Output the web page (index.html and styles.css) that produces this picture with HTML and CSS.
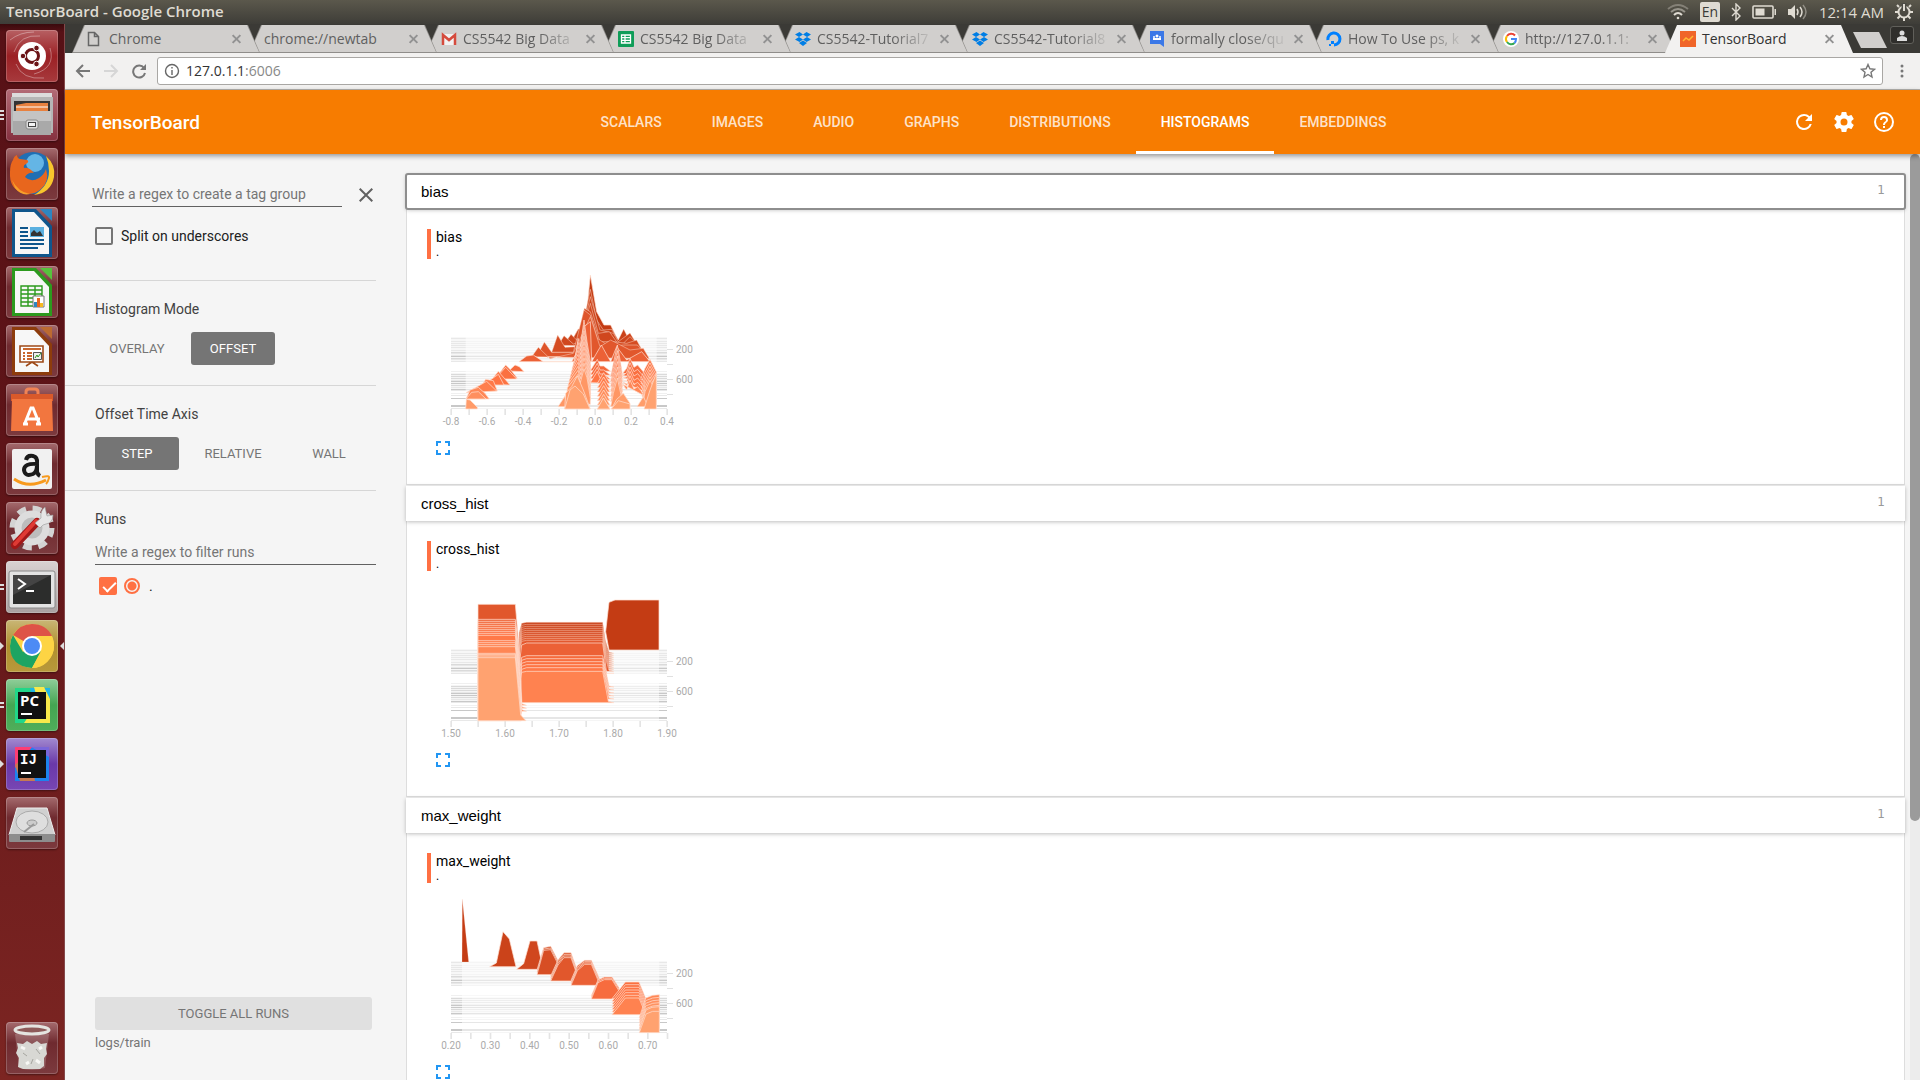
FILE: index.html
```html
<!DOCTYPE html>
<html lang="en">
<head>
<meta charset="utf-8">
<title>TensorBoard</title>
<link rel="stylesheet" href="styles.css">
</head>
<body>
<header class="panel">
  <span class="panel-title">TensorBoard - Google Chrome</span>
  <div class="indicators">
    <svg width="22" height="18" viewBox="0 0 22 18" fill="none" stroke="#dfdbd2" stroke-width="2"><path d="M1 6Q11-2 21 6" opacity=".35"/><path d="M4 9Q11 3 18 9" opacity=".5"/><path d="M7 12Q11 8 15 12"/><circle cx="11" cy="15" r="1.3" fill="#dfdbd2" stroke="none"/></svg>
    <span class="lang">En</span>
    <svg width="10" height="18" viewBox="0 0 10 18" fill="none" stroke="#dfdbd2" stroke-width="1.4"><path d="M1 5l8 8-4 4V1l4 4-8 8"/></svg>
    <svg width="25" height="14" viewBox="0 0 25 14"><rect x="1" y="1" width="20" height="12" rx="1" fill="none" stroke="#dfdbd2" stroke-width="1.6"/><rect x="3.5" y="3.500" width="9" height="7" fill="#dfdbd2"/><path d="M22.500 4v6h1.500V4z" fill="#dfdbd2"/></svg>
    <svg width="20" height="16" viewBox="0 0 20 16" fill="none" stroke="#dfdbd2" stroke-width="1.500"><path d="M0 5h3l4-4v14l-4-4H0z" fill="#dfdbd2" stroke="none"/><path d="M9 5q2 3 0 6M12 3q4 5 0 10"/><path d="M15 1q6 7 0 14" opacity=".45"/></svg>
    <time class="clock">12:14 AM</time>
    <svg width="18" height="18" viewBox="0 0 18 18" fill="none" stroke="#dfdbd2"><circle cx="9" cy="9" r="5.5" stroke-width="2"/><g stroke-width="2"><path d="M9 14v4M14 9h4M0 9h4M12.500 12.500l3 3M5.500 12.500l-3 3M14 4l2-2M4 4L2 2"/></g><path d="M9 0v8" stroke="#4b4a44" stroke-width="5"/><path d="M9 1v7" stroke-width="2"/></svg>
  </div>
</header>
<div class="desktop">
<nav class="launcher" aria-label="Launcher">
  <button class="tile tile-dash" aria-label="Dash"><svg viewBox="0 0 52 52"><g fill="none" stroke="#fff" opacity=".35"><path d="M8 22Q14 4 34 6M44 18q6 20-16 26M10 34Q16 50 38 48M4 10q10-8 24-8"/></g><circle cx="26" cy="26" r="14" fill="#fff"/><circle cx="26" cy="26" r="6.500" fill="none" stroke="#6b1417" stroke-width="3"/><g fill="#6b1417" stroke="#fff"><circle cx="17" cy="26" r="2.800"/><circle cx="30.500" cy="18" r="2.800"/><circle cx="30.500" cy="34" r="2.800"/></g></svg></button>
  <button class="tile tile-files" aria-label="Files"><svg viewBox="0 0 52 52"><path d="M6 4h40v8H6z" fill="#dcdcdc"/><path d="M5 8h42v36H5z" fill="#b5b5b5"/><path d="M8 12h36v12H8z" fill="#343434"/><path d="M10 16l10-2h22v10H10z" fill="#e8813f"/><path d="M10 18h32" stroke="#fff"/><path d="M7 22h38v24H7z" fill="#a9a9a9"/><path d="M7 22h38v10H7z" fill="#c4c4c4"/><rect x="20" y="31" width="12" height="9" rx="2" fill="#ddd" stroke="#888"/><rect x="22.500" y="33.500" width="7" height="4" fill="#f5f5f5" stroke="#444"/></svg><i class="pip"></i><i class="pip"></i><i class="pip"></i></button>
  <button class="tile" aria-label="Firefox"><svg viewBox="0 0 52 52"><circle cx="27" cy="25" r="21" fill="#1f6fb4"/><circle cx="29" cy="15" r="9" fill="#64b5e5"/><path d="M40 8q10 9 8 21-3 16-20 18 15-9 15-24 0-8-3-15z" fill="#f9c62c"/><path d="M7 12q1-4 4-5 0 3 3 4l7 1q3 1-1 4-3 1-2 4 5-1 10 5-6-1-9 4 6 6 14 1 5-3 7-9 4 12-5 20-8 7-18 4Q3 41 4 24q0-8 3-12z" fill="#e8661d"/><path d="M6 32q6 12 18 14-9 2-15-6z" fill="#f6a02b"/></svg></button>
  <button class="tile" aria-label="Writer"><svg viewBox="0 0 52 52"><path d="M6 2h24l16 17v31H6z" fill="#0f568c"/><path d="M9 5h19l15 16v26H9z" fill="#f7f7f7"/><path d="M34 2h12v12z" fill="#2d86c0"/><path d="M14 21h8M14 25h8M14 29h8M14 33h24M14 37h24M14 41h18" stroke="#0f568c" stroke-width="2"/><path d="M24 20h14v10H24z" fill="#5ab0e0"/><path d="M25 29v-3l3-3 3 3 3-2 3 5z" fill="#333"/></svg></button>
  <button class="tile" aria-label="Calc"><svg viewBox="0 0 52 52"><path d="M6 2h24l16 17v31H6z" fill="#2c9a1e"/><path d="M9 5h19l15 16v26H9z" fill="#f7f7f7"/><path d="M34 2h12v12z" fill="#57c23d"/><path d="M15 20h21v20H15zM15 24h21M15 28h21M15 32h21M15 36h21M22 20v20M29 20v20" fill="none" stroke="#2c9a1e" stroke-width="1.400"/><path d="M27 30h11v11H27z" fill="#fff" stroke="#777"/><path d="M28 36h3v5h-3z" fill="#2d86c0"/><path d="M31 32h3v9h-3z" fill="#e8661d"/><path d="M34 37h3v4h-3z" fill="#f5b921"/></svg></button>
  <button class="tile" aria-label="Impress"><svg viewBox="0 0 52 52"><path d="M6 2h24l16 17v31H6z" fill="#8d3c0c"/><path d="M9 5h19l15 16v26H9z" fill="#f7f7f7"/><path d="M34 2h12v12z" fill="#bc6a31"/><path d="M14 21h23v16H14zM20 41l6-4 6 4" fill="#fff" stroke="#9e4a18" stroke-width="1.600"/><path d="M17 24h18M17 28h2M17 31h2M17 34h2M21 28h5M21 31h5M21 34h5" stroke="#c9672e" stroke-width="2"/><path d="M27.500 27.500h8v7h-8z" fill="#eee" stroke="#555"/><path d="M29 33l2-3 1 2 3-4" fill="none" stroke="#2c9a1e"/></svg></button>
  <button class="tile" aria-label="Software"><svg viewBox="0 0 52 52"><path d="M20 16V8q0-3 3-3h6q3 0 3 3v8" fill="none" stroke="#f08355" stroke-width="3"/><path d="M5 10h42v7H5z" fill="#d9592a"/><path d="M6 15h40l1 32H5z" fill="#f2763f"/><path d="M17 40h5M30 40h5M19 39l6-15h2l6 15M20 35h14" fill="none" stroke="#fff" stroke-width="3"/></svg></button>
  <button class="tile" aria-label="Amazon"><svg viewBox="0 0 52 52"><rect x="6" y="6" width="40" height="40" rx="2" fill="#f1f1f1"/><path d="M20 17q1-5 7-4 5 1 4 8v8q1 3 3 4M31 21q-13-1-13 6 1 7 9 4 4-2 4-9" fill="none" stroke="#1b1b1b" stroke-width="4"/><path d="M8 36q15 10 32 1" fill="none" stroke="#f79a1e" stroke-width="3"/><path d="M36 34q8-2 7 1-1 4-3 6" fill="none" stroke="#f79a1e" stroke-width="2"/></svg></button>
  <button class="tile" aria-label="System Settings"><svg viewBox="0 0 52 52"><circle cx="26" cy="26" r="18" fill="none" stroke="#d3d3d3" stroke-width="9" stroke-dasharray="8 6.140"/><circle cx="26" cy="26" r="14" fill="#bdbdbd" stroke="#ddd" stroke-width="7"/><path d="M9 43l22-23" stroke="#a21818" stroke-width="8" stroke-linecap="round"/><path d="M9 42l21-23" stroke="#df3a34" stroke-width="4" stroke-linecap="round"/><path d="M29 21l6-5q-1-7 4-11l2 9 6-1q0 8-7 9-3 0-6 4z" fill="#e6e6e6" stroke="#999" stroke-width=".6"/></svg></button>
  <button class="tile tile-term" aria-label="Terminal"><svg viewBox="0 0 52 52"><rect x="3" y="10" width="46" height="37" rx="2" fill="#e3e3e3" stroke="#888"/><path d="M7 14h38v29H7z" fill="#2c2d2c"/><path d="M7 14h38L7 34z" fill="#444"/><path d="M12 18l7 5-7 5M20 30h8" fill="none" stroke="#fff" stroke-width="2"/></svg><i class="pip"></i><i class="pip"></i></button>
  <button class="tile tile-chrome" aria-label="Chrome"><svg viewBox="0 0 52 52"><circle cx="26" cy="26" r="22" fill="#fdd444"/><path d="M26 26L7 15Q14 4 26 4q14 0 20 12H26z" fill="#de5347"/><path d="M26 26l9 6-9 16Q4 46 4 26q0-6 3-11l10 17z" fill="#1da462"/><path d="M26 16h20q6 14-5 26-6 6-15 6l9-17z" fill="#fdd444"/><circle cx="26" cy="26" r="10" fill="#fff"/><circle cx="26" cy="26" r="8" fill="#4c8bf5"/></svg><i class="arrow"></i><i class="arrow arrow-right"></i></button>
  <button class="tile tile-pc" aria-label="PyCharm"><svg viewBox="0 0 52 52"><path d="M9 9h20l-6 35H9z" fill="#21d789"/><path d="M24 9h20v17L28 28z" fill="#1fb5e5"/><path d="M28 8h10l6 12v24H18l4-6h14z" fill="#f7e94b"/><path d="M12 13h28v27H12z" fill="#111"/><text x="14" y="27" font-family="Open Sans, sans-serif" font-weight="700" font-size="15" fill="#fff">PC</text><path d="M15 35h11" stroke="#fff" stroke-width="2"/></svg><i class="pip"></i><i class="pip"></i></button>
  <button class="tile tile-ij" aria-label="IntelliJ IDEA"><svg viewBox="0 0 52 52"><path d="M9 9h34v34H9z" fill="#1d83ee"/><path d="M9 9h17L9 30z" fill="#fe3d74"/><path d="M9 27l15-14 5 30H14z" fill="#c57a52"/><path d="M25 9h18v10z" fill="#7a66d9"/><path d="M12 12h28v28H12z" fill="#111"/><text x="14" y="26" font-family="Liberation Mono, monospace" font-weight="700" font-size="14" fill="#fff">IJ</text><path d="M15 35h10" stroke="#fff" stroke-width="2"/></svg><i class="arrow"></i></button>
  <button class="tile" aria-label="Disk"><svg viewBox="0 0 52 52"><path d="M11 11h30l8 27H3z" fill="#d0d0d0" stroke="#eee"/><path d="M3 37h46v7q0 1-1 1H4q-1 0-1-1z" fill="#8d8d8d"/><path d="M14 39h22v4H14z" fill="#333"/><ellipse cx="26" cy="25" rx="16" ry="11" fill="#dedede" stroke="#aaa"/><ellipse cx="26" cy="26" rx="5" ry="3" fill="#ccc" stroke="#999"/><path d="M28 27l-10 8" stroke="#999" stroke-width="2"/></svg></button>
  <button class="tile tile-trash" aria-label="Trash"><svg viewBox="0 0 52 52"><path d="M9 12h34l-4 34q-13 4-26 0z" fill="#fff" opacity=".2"/><path d="M11 21l6 1 4-3 5 3 5-3 4 3 6-1-1 6 1 5-3 4v8l-4 3H17l-5-2 1-9-3-5 2-5z" fill="#d8d8d4"/><path d="M15 25l4 2M30 38l4 3M20 42l3-2M36 25l-3 2" stroke="#f7f7f4" stroke-width="3"/><path d="M17 31l4 3M30 27l4 5M25 42l2-5" stroke="#a5a59f"/><ellipse cx="26" cy="8" rx="17" ry="4" fill="#8e5a59" stroke="#e4e4e0" stroke-width="3"/></svg></button>
</nav>
<div class="browser">
  <div class="tabstrip">
    <div class="tabs">
      <div class="tab"><svg class="favicon" viewBox="0 0 16 16"><path d="M1.500 1.500h6l4 4v9h-10zM7.500 1.500v4h4" fill="none" stroke="#666" stroke-width="1.500"/></svg><span class="tab-title">Chrome</span><button class="tab-close" aria-label="Close tab"></button></div>
      <div class="tab"><span class="tab-title">chrome://newtab</span><button class="tab-close" aria-label="Close tab"></button></div>
      <div class="tab"><svg class="favicon" viewBox="0 0 16 16"><path d="M1 3h14v11H1z" fill="#f1f1f1"/><path d="M2 14V4l6 5 6-5v10" fill="none" stroke="#d54b3d" stroke-width="2.500"/></svg><span class="tab-title fade">CS5542 Big Data</span><button class="tab-close" aria-label="Close tab"></button></div>
      <div class="tab"><svg class="favicon" viewBox="0 0 16 16"><rect width="16" height="16" rx="1" fill="#0f9d58"/><path d="M3.500 4h9v8h-9zM3.500 6.700h9M3.500 9.300h9M7 4v8" fill="none" stroke="#fff" stroke-width="1.300"/></svg><span class="tab-title fade">CS5542 Big Data</span><button class="tab-close" aria-label="Close tab"></button></div>
      <div class="tab"><svg class="favicon" viewBox="0 0 16 16"><path d="M4.500 1L8 3.500 4 6 0 3.500zM11.500 1L16 3.500 12 6 8 3.500zM4 6l4 2.500L4.500 11 0 8.500zM12 6l4 2.500-4.500 2.500L8 8.500zM8 9.500l4 2.500-4 3-4-3z" fill="#007ee5"/></svg><span class="tab-title fade">CS5542-Tutorial7</span><button class="tab-close" aria-label="Close tab"></button></div>
      <div class="tab"><svg class="favicon" viewBox="0 0 16 16"><path d="M4.500 1L8 3.500 4 6 0 3.500zM11.500 1L16 3.500 12 6 8 3.500zM4 6l4 2.500L4.500 11 0 8.500zM12 6l4 2.500-4.500 2.500L8 8.500zM8 9.500l4 2.500-4 3-4-3z" fill="#007ee5"/></svg><span class="tab-title fade">CS5542-Tutorial8</span><button class="tab-close" aria-label="Close tab"></button></div>
      <div class="tab"><svg class="favicon" viewBox="0 0 16 16"><path d="M1 0h14v16l-4-3H1z" fill="#3b78e7"/><path d="M4 9V7h8v2z" fill="#fff"/><circle cx="8" cy="5" r="1.500" fill="#fff"/><circle cx="5" cy="6" r="1" fill="#fff"/><circle cx="11" cy="6" r="1" fill="#fff"/></svg><span class="tab-title fade">formally close/qu</span><button class="tab-close" aria-label="Close tab"></button></div>
      <div class="tab"><svg class="favicon" viewBox="0 0 16 16"><path d="M2 9a6 6 0 1 1 6 5" fill="none" stroke="#0080ff" stroke-width="3"/><path d="M5 10h3v3H5zM3 13h2v2H3z" fill="#0080ff"/></svg><span class="tab-title fade">How To Use ps, k</span><button class="tab-close" aria-label="Close tab"></button></div>
      <div class="tab"><svg class="favicon" viewBox="0 0 16 16"><circle cx="8" cy="8" r="8" fill="#fff"/><g fill="none" stroke-width="2"><path d="M12 4.500A5 5 0 0 0 4 5" stroke="#ea4335"/><path d="M4 5a5 5 0 0 0 0 6" stroke="#fbbc05"/><path d="M4 11a5 5 0 0 0 7.500 1" stroke="#34a853"/><path d="M11.500 12Q13 10.500 13 8H8" stroke="#4285f4"/></g></svg><span class="tab-title fade">http://127.0.1.1:</span><button class="tab-close" aria-label="Close tab"></button></div>
      <div class="tab tab-active"><svg class="favicon" viewBox="0 0 16 16"><path d="M0 0h16v16H0z" fill="#f06529"/><path d="M3 10l3-3 3 2 4-4" fill="none" stroke="#ffb733" stroke-width="1.500"/></svg><span class="tab-title">TensorBoard</span><button class="tab-close" aria-label="Close tab"></button></div>
    </div>
    <button class="new-tab" aria-label="New tab"></button>
    <button class="profile" aria-label="Profile"><svg width="10" height="11" viewBox="0 0 10 11"><circle cx="5" cy="3" r="2.500" fill="#ddd"/><path d="M0 11V8q5-4 10 0v3z" fill="#ddd"/></svg></button>
  </div>
  <div class="toolbar">
    <button class="tool" aria-label="Back"><svg width="16" height="16" viewBox="0 0 16 16" fill="none" stroke="#777" stroke-width="2"><path d="M15 8H2M8 2L2 8l6 6"/></svg></button>
    <button class="tool" aria-label="Forward"><svg width="16" height="16" viewBox="0 0 16 16" fill="none" stroke="#d6d6d6" stroke-width="2"><path d="M1 8h13M8 2l6 6-6 6"/></svg></button>
    <button class="tool" aria-label="Reload"><svg width="16" height="16" viewBox="0 0 16 16"><path d="M13 5a6 6 0 1 0 1 5" fill="none" stroke="#777" stroke-width="2"/><path d="M15 1v6H9z" fill="#777"/></svg></button>
    <div class="omnibox">
      <svg width="16" height="16" viewBox="0 0 16 16" fill="none" stroke="#666" stroke-width="1.400"><circle cx="8" cy="8" r="6.500"/><path d="M8 7v5M8 4v1.600"/></svg>
      <span class="url">127.0.1.1<span class="port">:6006</span></span>
      <svg width="16" height="16" viewBox="0 0 16 16" fill="none" stroke="#777" stroke-width="1.400"><path d="M8 1.500l1.900 4.300 4.600.5-3.500 3 1 4.700-4-2.500L4 14l1-4.700-3.500-3 4.600-.5z"/></svg>
    </div>
    <button class="tool menu" aria-label="Menu"><svg width="4" height="16" viewBox="0 0 4 16" fill="#777"><circle cx="2" cy="3" r="1.500"/><circle cx="2" cy="8" r="1.500"/><circle cx="2" cy="13" r="1.500"/></svg></button>
  </div>
  <div class="app-header">
    <h1 class="brand">TensorBoard</h1>
    <nav class="dash-tabs">
      <a href="#scalars">SCALARS</a><a href="#images">IMAGES</a><a href="#audio">AUDIO</a><a href="#graphs">GRAPHS</a><a href="#distributions">DISTRIBUTIONS</a><a href="#histograms" class="selected">HISTOGRAMS</a><a href="#embeddings">EMBEDDINGS</a>
    </nav>
    <div class="actions">
      <button aria-label="Reload data"><svg width="24" height="24" viewBox="0 0 24 24" fill="#fff"><path d="M17.650 6.350A7.958 7.958 0 0 0 12 4a8 8 0 1 0 7.730 10h-2.080A6 6 0 1 1 12 6c1.660 0 3.140.69 4.220 1.780L13 11h7V4z"/></svg></button>
      <button aria-label="Settings"><svg width="24" height="24" viewBox="0 0 24 24" fill="#fff"><path d="M19.430 12.980c.04-.32.07-.64.07-.98s-.03-.66-.07-.98l2.110-1.650a.5.500 0 0 0 .12-.64l-2-3.460a.5.500 0 0 0-.61-.22l-2.490 1a7.300 7.300 0 0 0-1.690-.98l-.38-2.650A.49.490 0 0 0 14 2h-4a.49.490 0 0 0-.49.420l-.38 2.650c-.61.250-1.170.590-1.690.980l-2.490-1a.49.490 0 0 0-.61.220l-2 3.460a.5.500 0 0 0 .12.640l2.110 1.650c-.04.320-.07.650-.07.980s.03.660.07.980l-2.110 1.650a.5.500 0 0 0-.12.640l2 3.460c.12.220.39.300.61.220l2.490-1c.52.400 1.080.730 1.690.980l.38 2.650c.03.240.24.420.49.420h4c.25 0 .46-.18.49-.42l.38-2.650c.61-.25 1.170-.59 1.690-.98l2.490 1c.23.090.49 0 .61-.22l2-3.460a.5.500 0 0 0-.12-.64zM12 15.500a3.500 3.500 0 1 1 0-7 3.500 3.500 0 0 1 0 7z"/></svg></button>
      <button aria-label="Help"><svg width="24" height="24" viewBox="0 0 24 24" fill="#fff"><path d="M11 18h2v-2h-2zm1-16a10 10 0 1 0 0 20 10 10 0 0 0 0-20zm0 18a8 8 0 1 1 0-16 8 8 0 0 1 0 16zm0-14a4 4 0 0 0-4 4h2a2 2 0 1 1 4 0c0 2-3 1.750-3 5h2c0-2.250 3-2.500 3-5a4 4 0 0 0-4-4z"/></svg></button>
    </div>
  </div>
  <div class="content">
    <aside class="sidebar">
      <section class="group group-first">
        <div class="regex-row"><input class="text-input" type="text" placeholder="Write a regex to create a tag group" aria-label="Tag group regex"><button class="clear" aria-label="Clear"><svg width="14" height="14" viewBox="0 0 14 14" stroke="#616161" stroke-width="2"><path d="M.7.7l12.600 12.600M13.300.7L.7 13.300"/></svg></button></div>
        <label class="split"><input type="checkbox" class="check">Split on underscores</label>
      </section>
      <section class="group">
        <h3>Histogram Mode</h3>
        <div class="choices"><button>OVERLAY</button><button class="on">OFFSET</button></div>
      </section>
      <section class="group">
        <h3>Offset Time Axis</h3>
        <div class="choices"><button class="on">STEP</button><button>RELATIVE</button><button>WALL</button></div>
      </section>
      <section class="group group-runs">
        <h3>Runs</h3>
        <input class="text-input" type="text" placeholder="Write a regex to filter runs" aria-label="Filter runs">
        <div class="run"><input type="checkbox" class="check orange" id="run-check" checked><input type="radio" class="only" aria-label="Show only this run" checked><label for="run-check">.</label></div>
        <div class="runs-footer"><button class="toggle">TOGGLE ALL RUNS</button><div class="logdir">logs/train</div></div>
      </section>
    </aside>
    <main class="panes">
      <section class="pane">
        <button class="pane-head focused"><span>bias</span><span class="count">1</span></button>
        <div class="pane-body"><div class="card-title"><h2>bias</h2><div class="run-name">.</div></div><svg class="chart" id="chart-bias" viewBox="81 300 819 510" role="img" aria-label="bias histogram"></svg><button class="expand" aria-label="Expand"><svg width="14" height="14" viewBox="0 0 14 14"><path d="M1 5V1h4M9 1h4v4M13 9v4H9M5 13H1V9" fill="none" stroke="#2196f3" stroke-width="2"/></svg></button></div>
      </section>
      <section class="pane">
        <button class="pane-head"><span>cross_hist</span><span class="count">1</span></button>
        <div class="pane-body"><div class="card-title"><h2>cross_hist</h2><div class="run-name">.</div></div><svg class="chart" id="chart-cross" viewBox="81 300 819 510" role="img" aria-label="cross_hist histogram"></svg><button class="expand" aria-label="Expand"><svg width="14" height="14" viewBox="0 0 14 14"><path d="M1 5V1h4M9 1h4v4M13 9v4H9M5 13H1V9" fill="none" stroke="#2196f3" stroke-width="2"/></svg></button></div>
      </section>
      <section class="pane">
        <button class="pane-head"><span>max_weight</span><span class="count">1</span></button>
        <div class="pane-body"><div class="card-title"><h2>max_weight</h2><div class="run-name">.</div></div><svg class="chart" id="chart-max" viewBox="81 300 819 510" role="img" aria-label="max_weight histogram"></svg><button class="expand" aria-label="Expand"><svg width="14" height="14" viewBox="0 0 14 14"><path d="M1 5V1h4M9 1h4v4M13 9v4H9M5 13H1V9" fill="none" stroke="#2196f3" stroke-width="2"/></svg></button></div>
      </section>
    </main>
    <div class="scrollbar"><div class="thumb"></div></div>
  </div>
</div>
</div>
<script src="charts.js"></script>
</body>
</html>
```
FILE: styles.css
```css
* { box-sizing: border-box; }
html, body { height: 100%; margin: 0; }
body { display: flex; flex-direction: column; overflow: hidden; font-family: Roboto, sans-serif; font-size: 14px; color: #212121; background: #f5f5f5; }
button { padding: 0; border: 0; background: none; font: inherit; color: inherit; }
h1, h2, h3 { margin: 0; font-weight: 400; }
svg { display: block; flex: none; }

/* desktop panel */
.panel { display: flex; flex: none; align-items: center; justify-content: space-between; height: 24px; padding: 0 7px 0 6px; background: linear-gradient(#5b584c, #3e3d38); color: #dfdbd2; font-family: "Open Sans", "Noto Sans", sans-serif; }
.panel-title { padding-bottom: 2px; font-size: 15px; font-weight: 600; }
.indicators { display: flex; align-items: center; gap: 11px; }
.lang { width: 20px; height: 20px; border-radius: 2px; background: #dfdbd2; color: #3c3b37; line-height: 20px; text-align: center; }
.clock { font-size: 15px; }
.desktop { display: flex; flex: 1; min-height: 0; }

/* launcher */
.launcher { display: flex; flex: none; flex-direction: column; gap: 7px; width: 65px; padding: 6px; border-right: 1px solid #84484a; background: linear-gradient(#3a0a0d, #571116 8px, #5e1418 40%, #7c2522); }
.tile { position: relative; display: flex; flex-direction: column; justify-content: center; gap: 2px; width: 52px; height: 52px; border-radius: 4px; background: linear-gradient(#a56b6e, #6f2a2f 40%, #7c3a3e); box-shadow: inset 0 0 0 1px #ffffff33, 0 1px 2px #0006; }
.tile svg { position: absolute; inset: 0; width: 52px; height: 52px; }
.tile-dash { background: linear-gradient(#b76063, #9b2024 50%, #a73a3d); }
.tile-files { background: linear-gradient(#b36b76, #85303f); }
.tile-term { background: linear-gradient(#d9d2d2, #a9a1a1); }
.tile-chrome { background: linear-gradient(#c9b676, #b08f2e 50%, #b8993b); }
.tile-pc { background: linear-gradient(#8fce99, #44a552 50%, #4fae5a); }
.tile-ij { background: linear-gradient(#a28ad0, #6a38a8 50%, #7746b4); }
.tile-trash { margin-top: auto; }
.pip { width: 4px; height: 2px; margin-left: -6px; background: #ddd; }
.arrow { position: absolute; left: -6px; top: 22px; border: 4px solid transparent; border-left-color: #ddd; border-right-width: 0; }
.arrow-right { left: auto; right: -6px; border-width: 4px 4px 4px 0; border-right-color: #ddd; }

/* browser chrome */
.browser { display: flex; flex: 1; flex-direction: column; min-width: 0; }
.tabstrip { display: flex; flex: none; height: 29px; padding: 1px 6px 0 7px; background: #3b3a36; font-family: "Open Sans", "Noto Sans", sans-serif; }
.tabs { display: flex; flex: 0 1 auto; min-width: 0; padding-right: 11px; }
.tab { position: relative; display: flex; flex: 0 1 auto; align-items: center; gap: 6px; width: 188px; min-width: 0; margin-right: -11px; padding: 0 16px 0 15px; background: #8f8d8a; color: #5f5f5f; clip-path: polygon(0 100%, 12px 0, calc(100% - 12px) 0, 100% 100%); }
.tab::before { content: ""; position: absolute; inset: 0 1px 1px; z-index: -1; background: #d1cfcd; clip-path: polygon(0 100%, 12px 0, calc(100% - 12px) 0, 100% 100%); }
.tab:nth-child(1) { z-index: 9; }
.tab:nth-child(2) { z-index: 8; }
.tab:nth-child(3) { z-index: 7; }
.tab:nth-child(4) { z-index: 6; }
.tab:nth-child(5) { z-index: 5; }
.tab:nth-child(6) { z-index: 4; }
.tab:nth-child(7) { z-index: 3; }
.tab:nth-child(8) { z-index: 2; }
.tab:nth-child(9) { z-index: 1; }
.tab.tab-active { z-index: 10; background: #f2f1f0; color: #333; }
.tab-active::before { background: #f2f1f0; }
.favicon { width: 16px; height: 16px; }
.tab-title { flex: 1; padding-bottom: 2px; white-space: nowrap; }
.fade { mask-image: linear-gradient(90deg, #000 75px, transparent 118px); }
.tab-close { position: relative; width: 16px; height: 16px; }
.tab-close::before, .tab-close::after { content: ""; position: absolute; left: 3px; top: 7px; width: 11px; height: 2px; background: #929292; transform: rotate(45deg); }
.tab-close::after { transform: rotate(-45deg); }
.new-tab { width: 34px; height: 16px; margin: 7px auto 0 0; background: #d1cfcd; clip-path: polygon(0 0, 26px 0, 100% 100%, 8px 100%); }
.profile { display: grid; place-items: center; width: 24px; height: 18px; margin-top: 1px; border: 1px solid #605f5a; border-radius: 3px; background: #2f2e2b; }
.toolbar { display: flex; flex: none; align-items: center; height: 37px; padding: 0 12px 0 10px; border-bottom: 1px solid #b5b2ae; background: #f2f1f0; }
.tool { width: 16px; margin-right: 12px; }
.menu { width: 4px; margin: 0 4px 0 17px; }
.omnibox { display: flex; flex: 1; align-items: center; gap: 6px; height: 28px; margin-left: -2px; padding: 0 6px; border: 1px solid #a9a7a4; border-radius: 3px; background: #fff; font-family: "Open Sans", "Noto Sans", sans-serif; }
.url { flex: 1; padding-bottom: 1px; color: #333; }
.port { color: #888; }

/* application header */
.app-header { position: relative; z-index: 1; display: grid; grid-template-columns: 1fr auto 1fr; flex: none; align-items: center; height: 64px; padding: 0 24px 0 26px; background: #f77c00; box-shadow: 0 2px 5px #0006; color: #fff; }
.brand { font-size: 19px; font-weight: 500; }
.dash-tabs { display: flex; height: 64px; }
.dash-tabs a { display: flex; align-items: center; padding: 3px 25px 0; border-bottom: 3px solid transparent; color: #fffc; font-weight: 500; text-decoration: none; }
.dash-tabs .selected { border-color: #fff; color: #fff; }
.actions { display: flex; gap: 16px; justify-content: flex-end; }

/* sidebar */
.content { display: flex; flex: 1; min-height: 0; }
.sidebar { display: flex; flex: none; flex-direction: column; width: 311px; }
.group { padding: 18px 0 20px 30px; border-bottom: 1px solid #d6d6d6; }
.group-first { padding: 28px 0 35px 27px; }
.group-runs { display: flex; flex: 1; flex-direction: column; padding-bottom: 27px; border: 0; }
.group h3 { font-size: 14px; line-height: 20px; color: #424242; }
.regex-row { display: flex; align-items: center; gap: 17px; }
.text-input { width: 250px; height: 25px; padding: 0; border: 0; border-bottom: 1px solid #616161; background: none; font: inherit; }
.text-input::placeholder { color: #757575; opacity: 1; }
.split { display: flex; align-items: center; gap: 8px; margin: 20px 0 0 3px; height: 18px; }
.check { position: relative; appearance: none; width: 18px; height: 18px; margin: 0; border: 2px solid #757575; border-radius: 2px; }
.check.orange { border-color: #ff7043; background: #ff7043; }
.check:checked::after { content: ""; position: absolute; left: 5px; top: 0; width: 5px; height: 11px; border: solid #fff; border-width: 0 2px 2px 0; transform: rotate(45deg); }
.choices { display: flex; gap: 12px; margin-top: 13px; }
.choices button { width: 84px; height: 33px; border-radius: 3px; color: #757575; font-size: 13px; }
.choices .on { background: #757575; color: #fff; }
.group-runs .text-input { width: 100%; margin-top: 11px; }
.run { display: flex; align-items: center; gap: 7px; margin: 12px 0 0 4px; height: 18px; }
.only { appearance: none; width: 16px; height: 16px; margin: 0; border: 2px solid #ff7043; border-radius: 50%; background: radial-gradient(circle, #ff7043 4px, transparent 5px); }
.run label { margin-left: 2px; }
.runs-footer { margin-top: auto; }
.toggle { width: 277px; height: 33px; border-radius: 3px; background: #e0e0e0; color: #757575; font-size: 13px; }
.logdir { margin-top: 3px; font-size: 13px; line-height: 20px; color: #757575; }

/* panes */
.panes { display: flex; flex: 1; flex-direction: column; gap: 1px; min-width: 0; padding: 20px 5px 0 30px; overflow: hidden; }
.pane { flex: none; }
.pane-head { position: relative; display: flex; align-items: center; justify-content: space-between; width: 100%; height: 35px; padding: 0 20px 0 15px; background: #fff; box-shadow: 0 1px 4px #0004; color: #000; font-family: "Liberation Sans", sans-serif; font-size: 15px; }
.focused { outline: 2px solid #8e8e8e; outline-offset: -1px; border-radius: 2px; }
.count { padding-bottom: 3px; color: #999; font-family: "DejaVu Sans", sans-serif; font-size: 12px; }
.pane-body { height: 276px; padding: 20px 20px 0; border: 1px solid #ddd; border-top: 0; background: #fff; }
.card-title { height: 30px; padding-left: 5px; border-left: 4px solid #ff7043; color: #000; }
.card-title h2 { font-size: 14px; line-height: 17px; }
.run-name { font-size: 12px; line-height: 13px; }
.chart { width: 273px; height: 170px; margin-top: 1px; font-size: 30px; }
.chart text { fill: #aaa; }
.expand { display: block; margin: 11px 0 0 9px; }
.scrollbar { flex: none; width: 10px; background: #ececec; }
.thumb { height: 72%; border-radius: 5px; background: #9b9b9b; }
```
FILE: charts.js
```js
const NS = "http://www.w3.org/2000/svg";

function add(parent, name, attrs, text) {
  const el = document.createElementNS(NS, name);
  for (const key in attrs) el.setAttribute(key, attrs[key]);
  if (text) el.textContent = text;
  parent.appendChild(el);
  return el;
}

function shade(t) {
  const stops = [[196, 60, 20], [236, 97, 54], [255, 117, 68], [255, 162, 112]];
  const p = Math.min(2.999, t * 3), i = Math.floor(p), f = p - i;
  return "rgb(" + stops[i].map((c, k) => Math.round(c + (stops[i + 1][k] - c) * f)).join(",") + ")";
}

function ridge(g, t, points, stroke) {
  add(g, "polygon", { points, fill: shade(t), stroke: "#ffe0d2", "stroke-width": stroke || 3, "stroke-opacity": 0.7 });
}

/* Baseline of every recorded step: y position and darkness. */
const steps = [[534, 1], [543, 1], [549, 1], [555, 1], [561, 1], [570, 1], [576, 2], [579, 1], [585, 1], [588, 3], [594, 2], [597, 1], [603, 1],
  [633, 0], [642, 2], [648, 2], [654, 2], [660, 1], [663, 3], [669, 3], [675, 2], [681, 1], [687, 3], [690, 1], [699, 0], [705, 1], [714, 3], [735, 3], [738, 3], [744, 1]];
const greys = ["#f0f0f0", "#e8e8e8", "#dadada", "#c8c8c8"];

function frame(id, from, to, tickStep, labels, labelStep) {
  const svg = document.getElementById(id);
  add(svg, "rect", { x: 153, y: 531, width: 648, height: 75, fill: "#f7f7f7" });
  add(svg, "rect", { x: 153, y: 639, width: 648, height: 54, fill: "#f5f5f5" });
  for (const [y, d] of steps) add(svg, "rect", { x: 153, y, width: 648, height: 3, fill: greys[d] });
  add(svg, "rect", { x: from, y: 528, width: to - from, height: 219, fill: "#fff", opacity: 0.55 });
  for (let x = 153; x < 803; x += tickStep) add(svg, "rect", { x: x - 2, y: 747, width: 5, height: 18, fill: "#e4e4e4" });
  for (const y of [568, 613, 658, 703]) add(svg, "rect", { x: 801, y: y - 1, width: 18, height: 3, fill: "#e0e0e0" });
  add(svg, "text", { x: 828, y: 579 }, "200");
  add(svg, "text", { x: 828, y: 669 }, "600");
  labels.forEach((s, i) => add(svg, "text", { x: 153 + i * labelStep, y: 795, "text-anchor": "middle" }, s));
  return add(svg, "g", {});
}

/* bias */
let g = frame("chart-bias", 197, 770, 54, ["-0.8", "-0.6", "-0.4", "-0.2", "0.0", "0.2", "0.4"], 108);
ridge(g, 0, "520,533 535,507 548,507 558,480 571,345 590,455 612,495 632,495 650,533");
ridge(g, 0.05, "500,552 522,530 535,507 545,508 556,460 571,388 590,480 610,510 635,508 655,540 671,507 690,545 700,552", 2);
ridge(g, 0.08, "490,556 513,523 530,540 545,520 571,410 600,510 640,520 655,545 690,519 706,545 715,556", 2);
ridge(g, 0.1, "475,556 492,527 520,552 540,545 571,430 595,520 628,515 660,560 690,530 720,560", 2);
ridge(g, 0.14, "455,577 473,525 495,562 530,560 553,445 571,455 600,545 640,545 680,550 710,540 730,577", 2);
ridge(g, 0.22, "410,590 433,546 455,577 520,577 552,450 571,465 592,535 630,560 670,555 712,555 745,590", 2);
ridge(g, 0.24, "395,590 415,562 450,596 520,580 571,470 600,560 632,540 690,570 730,565 748,596", 2);
ridge(g, 0.33, "357,605 380,588 400,585 430,605 515,605 540,560 552,500 571,485 575,605 604,555 632,605 650,560 680,600 725,575 750,605");
/* light half: the four clusters slide down as the step grows */
for (let i = 0; i < 4; i++) {
  const d = i * 12;
  ridge(g, 0.45 + i * 0.07, `571,${632 + d} 592,${598 + d} 600,${618 + d} 611,${618 + d} 632,${634 + d}`);
}
for (let i = 0; i < 7; i++) {
  const d = i * 15;
  ridge(g, 0.5 + i * 0.07, `632,${650 + d} 640,${610 + d} 652,${555 + d * 1.1} 662,${610 + d} 668,${650 + d}`);
}
for (let i = 0; i < 6; i++) {
  const d = i * 13;
  ridge(g, 0.5 + i * 0.06, `668,${640 + d * 0.5} 680,${625 + d} 690,${595 + d} 702,${622 + d} 713,${615 + d} 738,${645 + d}`);
}
for (let i = 0; i < 7; i++) {
  const d = i * 13;
  ridge(g, 0.7 + i * 0.04, `592,${670 + d} 611,${638 + d} 630,${670 + d}`);
}
for (let i = 0; i < 10; i++) {
  const d = i * 12, left = 525 - i * 3;
  ridge(g, 0.42 + i * 0.055, `${left},${625 + d} ${left + 4},${575 + d} 534,${535 + d} 541,${560 + d} 552,${480 + d * 1.35} 561,${545 + d} 571,${605 + d} 571,${625 + d}`);
}
for (let i = 0; i < 7; i++) {
  const d = i * 13;
  ridge(g, 0.6 + i * 0.05, `${722 + i},${658 + d} 735,${625 + d * 0.9} 750,${598 + d * 0.8} 769,${636 + d * 0.8} 769,${660 + d}`);
}
ridge(g, 0.5, "326,633 345,615 358,620 372,635");
ridge(g, 0.55, "298,640 317,615 335,633 352,655 310,657");
ridge(g, 0.6, "285,657 317,622 350,657");
ridge(g, 0.63, "265,673 295,634 330,675");
ridge(g, 0.66, "250,675 295,643 312,675");
ridge(g, 0.7, "235,693 257,658 280,662 292,693");
ridge(g, 0.73, "198,698 235,678 260,664 290,693");
ridge(g, 0.8, "198,717 210,690 235,682 255,700 268,717");
ridge(g, 0.86, "198,717 215,697 235,695 258,717");
ridge(g, 0.95, "197,747 199,718 210,720 232,742 232,747");
ridge(g, 0.92, "474,740 495,708 500,740");
ridge(g, 0.95, "494,747 497,700 515,680 532,648 550,690 571,747");
ridge(g, 1, "494,747 510,690 525,678 550,702 570,747");
ridge(g, 1, "592,747 610,714 630,747");
ridge(g, 0.96, "634,747 650,718 670,700 690,730 690,747");
ridge(g, 1, "634,747 655,722 690,732 690,747");
ridge(g, 0.96, "711,740 730,710 745,740");
ridge(g, 1, "732,747 750,690 769,640 769,747");

/* cross_hist */
g = frame("chart-cross", 234, 777, 81, ["1.50", "1.60", "1.70", "1.80", "1.90"], 162);
g.setAttribute("transform", "translate(0 24)");
ridge(g, 0, "617,455 627,367 645,360 777,360 777,510 627,510");
for (let i = 0; i < 10; i++) ridge(g, 0.03 + i * 0.025, `357,${460 + i * 7} 365,${430 + i * 6} 380,${427 + i * 6} 608,${427 + i * 6} 616,${480 + i * 6} 627,${517 + i * 6} 642,${520 + i * 6} 365,${520 + i * 6}`, 2);
ridge(g, 0.33, "357,560 365,495 380,489 608,489 620,580 642,580 360,580");
for (let i = 0; i < 5; i++) ridge(g, 0.5 + i * 0.05, `357,${600 + i * 7} 365,${532 + i * 9} 380,${527 + i * 9} 608,${527 + i * 9} 627,${618 + i * 9} 642,${621 + i * 9} 365,${621 + i * 9}`, 3);
ridge(g, 0.76, "357,620 365,577 380,574 608,574 625,664 642,668 360,668");
for (let i = 0; i < 3; i++) ridge(g, 0.85, `362,${668 + i * 9} 368,${672 + i * 9} 380,${676 + i * 9} 362,${676 + i * 9}`, 2);
ridge(g, 0.24, "234,373 346,373 362,560 366,690 234,690");
for (let i = 0; i < 9; i++) ridge(g, 0.38 + i * 0.04, `234,${418 + i * 6} 346,${418 + i * 6} 358,${530 + i * 9} 364,690 234,690`);
for (let i = 0; i < 4; i++) ridge(g, 0.7 + i * 0.03, `234,${482 + i * 6} 346,${482 + i * 6} 358,${590 + i * 9} 364,700 234,700`);
for (let i = 0; i < 3; i++) ridge(g, 0.88 + i * 0.03, `234,${520 + i * 4} 346,${520 + i * 4} 359,${640 + i * 7} 364,722 234,722`);
ridge(g, 1, "234,533 346,533 362,705 378,722 234,722");

/* max_weight */
g = frame("chart-max", 186, 778, 59, ["0.20", "0.30", "0.40", "0.50", "0.60", "0.70"], 118);
g.setAttribute("transform", "translate(0 18)");
ridge(g, 0, "186,516 187,327 206,516", 1);
ridge(g, 0.06, "269,530 289,519 309,425 328,447 348,530");
ridge(g, 0.1, "350,538 371,521 390,453 411,453 420,495 430,538");
for (let i = 0; i < 3; i++) ridge(g, 0.12 + i * 0.02, `411,${540 + i * 7} 431,${473 + i * 4} 452,${469 + i * 5} 473,${510 + i * 5} 480,${540 + i * 7}`);
for (let i = 0; i < 4; i++) ridge(g, 0.18 + i * 0.02, `452,${558 + i * 5} 474,${510 + i * 5} 492,${488 + i * 5} 513,${488 + i * 5} 530,${536 + i * 5} 538,${558 + i * 5}`);
for (let i = 0; i < 4; i++) ridge(g, 0.26 + i * 0.02, `513,${571 + i * 5} 532,${527 + i * 5} 554,${511 + i * 4} 574,${511 + i * 4} 594,${556 + i * 5} 600,${571 + i * 5}`);
for (let i = 0; i < 3; i++) ridge(g, 0.42 + i * 0.05, `574,${617 + i * 5} 594,${570 + i * 4} 613,${561 + i * 4} 636,${561 + i * 4} 657,${593 + i * 5} 660,${617 + i * 5}`);
for (let i = 0; i < 7; i++) ridge(g, 0.58 + i * 0.03, `636,${626 + i * 8} 658,${599 + i * 8} 676,${576 + i * 8} 717,${576 + i * 8} 735,${620 + i * 8} 738,${626 + i * 8}`);
for (let i = 0; i < 5; i++) ridge(g, 0.8 + i * 0.03, `718,${683 + i * 8} 737,${624 + i * 8} 758,${616 + i * 8} 778,${614 + i * 8} 778,${683 + i * 8}`);
ridge(g, 0.97, "718,720 738,660 756,652 778,650 778,720");
ridge(g, 1, "718,728 738,672 758,664 778,664 778,728");
```
